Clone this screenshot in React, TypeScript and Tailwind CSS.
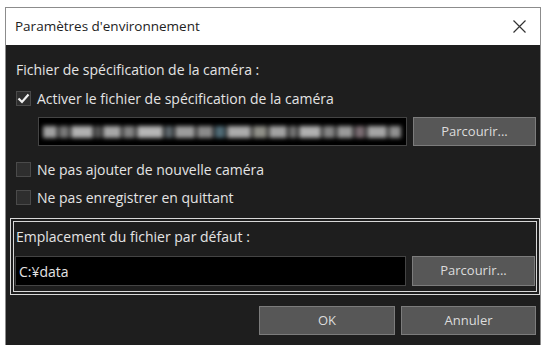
import React from 'react';

const font = { fontFamily: '"Open Sans", "Noto Sans", sans-serif' };

// blurred path inside the first input: blocks of grey, like the pixelated capture
const blurBlocks = [
    [14, '#bdbdbd'], [10, '#8e8e8e'], [22, '#d0d0d0'], [6, '#707070'], [18, '#c4c4c4'],
    [12, '#9a9a9a'], [26, '#d6d6d6'], [8, '#6f7a80'], [20, '#b8b8b8'], [16, '#a3a3a3'],
    [10, '#5e7d8a'], [24, '#c9c9c9'], [14, '#a8a8a0'], [18, '#bfbfbf'], [8, '#8a8a8a'],
    [22, '#cfcfcf'], [12, '#9c9c9c'], [16, '#b5b5b5'], [10, '#8f7f86'], [20, '#c2c2c2'],
    [12, '#aaaaaa'],
] as const;

const CheckBox = ({ checked }: { checked?: boolean }) => (
    <span className="w-[15px] h-[15px] border border-[#4a4a4a] bg-[#2e2e2e] flex items-center justify-center shrink-0">
        {checked && (
            <svg width="13" height="13" viewBox="0 0 13 13">
                <path d="M1.5 6.5 L5 10 L11.5 2.5" fill="none" stroke="#f0f0f0" strokeWidth="2.2" />
            </svg>
        )}
    </span>
);

const WinButton = ({ label, className }: { label: string; className: string }) => (
    <button className={`h-[29px] bg-[#575757] border border-[#7c7c7c] text-[#dcdcdc] text-[13px] font-medium ${className}`}>
        {label}
    </button>
);

const App = () => {
    return (
        <div className="w-[545px] h-[345px] bg-white overflow-hidden pl-[5px] pt-[7px]" style={font}>
            <div className="w-[536px] h-[350px] border border-[#8c8c8c] flex flex-col">
                <div className="h-[37px] bg-white flex items-center justify-between pl-[9px] pr-[14px] shrink-0">
                    <span className="text-[13.5px] text-[#222]">Paramètres d'environnement</span>
                    <svg width="13" height="13" viewBox="0 0 13 13">
                        <path d="M0.5 0.5 L12.5 12.5 M12.5 0.5 L0.5 12.5" stroke="#333" strokeWidth="1.2" />
                    </svg>
                </div>
                <div className="flex-1 bg-[#1e1e1e] flex flex-col pl-[10px] pr-[3px] text-[14px] text-[#e4e4e4] font-medium">
                    <div className="h-[20px] leading-[20px] mt-[15px]">Fichier de spécification de la caméra :</div>
                    <div className="h-[20px] mt-[8px] flex items-center gap-[6px]">
                        <CheckBox checked />
                        <span>Activer le fichier de spécification de la caméra</span>
                    </div>
                    <div className="mt-[9px] flex gap-[6px] pl-[22px] pr-[1px]">
                        <div className="w-[369px] h-[29px] bg-black border border-[#444] flex items-center px-[4px] overflow-hidden">
                            <div className="flex items-center gap-[2px] blur-[2px] opacity-85">
                                {blurBlocks.map(([w, c], i) => (
                                    <div key={i} className="h-[12px] shrink-0" style={{ width: w, backgroundColor: c }} />
                                ))}
                            </div>
                        </div>
                        <WinButton label="Parcourir..." className="w-[123px]" />
                    </div>
                    <div className="h-[20px] mt-[13px] flex items-center gap-[6px]">
                        <CheckBox />
                        <span>Ne pas ajouter de nouvelle caméra</span>
                    </div>
                    <div className="h-[20px] mt-[8px] flex items-center gap-[6px]">
                        <CheckBox />
                        <span>Ne pas enregistrer en quittant</span>
                    </div>
                    <div className="mt-[11px] -ml-[6px] mr-[-3px] border border-[#d8d8d8] p-[2px]">
                        <div className="border border-[#d8d8d8] pt-[5px] pb-[5px] px-[1px]">
                            <div className="h-[20px] leading-[20px] pl-[1px]">Emplacement du fichier par défaut :</div>
                            <div className="mt-[9px] flex justify-between">
                                <div className="w-[391px] h-[30px] bg-black border border-[#444] flex items-center px-[3px] text-[14px]">
                                    C:¥data
                                </div>
                                <WinButton label="Parcourir..." className="w-[123px] h-[30px]" />
                            </div>
                        </div>
                    </div>
                    <div className="mt-[11px] flex justify-end gap-[6px] pr-[1px]">
                        <WinButton label="OK" className="w-[136px]" />
                        <WinButton label="Annuler" className="w-[135px]" />
                    </div>
                </div>
            </div>
        </div>
    );
};

export default App;
